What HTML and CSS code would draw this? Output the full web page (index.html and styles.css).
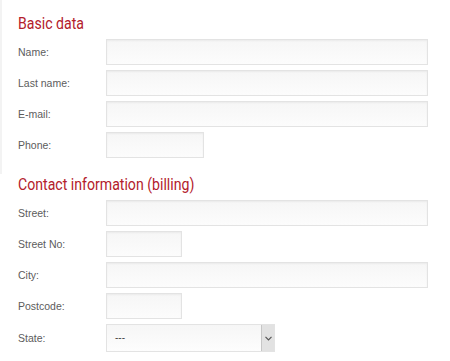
FILE: index.html
```html
<!DOCTYPE html>
<html lang="en">
<head>
    <meta charset="UTF-8">
    <meta name="viewport" content="width=device-width, initial-scale=1.0">
    <title>Order form</title>
    <link rel="stylesheet" href="styles.css">
</head>
<body>

    <!-- Basic data -->
    <div class="section first">
        <h2><span>Basic data</span></h2>
        <div class="form-row">
            <label for="name">Name:</label>
            <input type="text" id="name" class="wide">
        </div>
        <div class="form-row">
            <label for="lastname">Last name:</label>
            <input type="text" id="lastname" class="wide">
        </div>
        <div class="form-row">
            <label for="email">E-mail:</label>
            <input type="text" id="email" class="wide">
        </div>
        <div class="form-row">
            <label for="phone">Phone:</label>
            <input type="text" id="phone" class="medium">
        </div>
    </div>

    <!-- Contact information -->
    <div class="section">
        <h2><span>Contact information (billing)</span></h2>
        <div class="form-row">
            <label for="street">Street:</label>
            <input type="text" id="street" class="wide">
        </div>
        <div class="form-row">
            <label for="streetno">Street No:</label>
            <input type="text" id="streetno" class="short">
        </div>
        <div class="form-row">
            <label for="city">City:</label>
            <input type="text" id="city" class="wide">
        </div>
        <div class="form-row">
            <label for="postcode">Postcode:</label>
            <input type="text" id="postcode" class="short">
        </div>
        <div class="form-row">
            <label>State:</label>
            <div class="select-box">
                <span class="select-value">---</span>
                <span class="select-btn">
                    <svg width="7" height="5" viewBox="0 0 7 5"><path d="M0.5 0.8 L3.5 3.8 L6.5 0.8" fill="none" stroke="#555" stroke-width="1.2"/></svg>
                </span>
            </div>
        </div>
    </div>

</body>
</html>
```

FILE: styles.css
```css
body {
    margin: 0;
    padding: 0;
    background-color: #fff;
    font-family: 'Liberation Sans', Arial, sans-serif;
}

.section {
    padding: 0 0 0 18px;
}

.section.first {
    padding-top: 13px;
    padding-bottom: 11px;
    border-left: 2px solid #f3f3f3;
    padding-left: 16px;
}

h2 {
    margin: 0 0 6px 0;
    font-family: 'Roboto', sans-serif;
    font-weight: 400;
    font-size: 17px;
    line-height: 20px;
    color: #b3202b;
}

/* narrow headline face */
h2 span {
    display: inline-block;
    transform: scaleX(0.83);
    transform-origin: left center;
    white-space: nowrap;
}

.form-row {
    display: flex;
    align-items: center;
    margin-bottom: 5px;
}

.form-row label {
    width: 88px;
    flex-shrink: 0;
    font-size: 10.5px;
    color: #5c5c5c;
}

.form-row input {
    box-sizing: border-box;
    height: 26px;
    margin: 0;
    border: 1px solid #e3e3e3;
    border-radius: 0;
    background: linear-gradient(#f6f6f6, #fcfcfc);
    box-shadow: inset 0 1px 2px rgba(0, 0, 0, 0.05);
    outline: none;
}

.wide {
    width: 322px;
}

.medium {
    width: 98px;
}

.short {
    width: 76px;
}

.select-box {
    box-sizing: border-box;
    width: 169px;
    height: 28px;
    display: flex;
    border: 1px solid #e3e3e3;
    background: linear-gradient(#f6f6f6, #fdfdfd);
}

.select-value {
    flex: 1;
    padding-left: 8px;
    font-size: 10px;
    line-height: 26px;
    color: #444;
}

.select-btn {
    width: 12px;
    display: flex;
    align-items: center;
    justify-content: center;
    background: #e2e2e2;
    border-left: 1px solid #c6c6c6;
}
```
